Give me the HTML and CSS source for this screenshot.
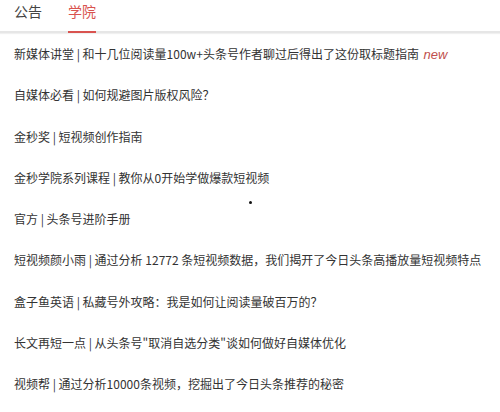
FILE: index.html
```html
<!DOCTYPE html>
<html lang="zh">
<head>
<meta charset="utf-8">
<link rel="stylesheet" href="styles.css">
</head>
<body>
<div class="page">
  <div class="tabs">
    <span class="tab">公告</span>
    <span class="tab active">学院</span>
  </div>
  <ul class="list">
    <li>新媒体讲堂 | 和十几位阅读量100w+头条号作者聊过后得出了这份取标题指南 <em class="new">new</em></li>
    <li>自媒体必看 | 如何规避图片版权风险？</li>
    <li>金秒奖 | 短视频创作指南</li>
    <li>金秒学院系列课程 | 教你从0开始学做爆款短视频</li>
    <li>官方 | 头条号进阶手册</li>
    <li>短视频颜小雨 | 通过分析 12772 条短视频数据，我们揭开了今日头条高播放量短视频特点</li>
    <li>盒子鱼英语 | 私藏号外攻略：我是如何让阅读量破百万的？</li>
    <li>长文再短一点 | 从头条号"取消自选分类"谈如何做好自媒体优化</li>
    <li>视频帮 | 通过分析10000条视频，挖掘出了今日头条推荐的秘密</li>
  </ul>
  <span class="dot"></span>
</div>
</body>
</html>
```
FILE: styles.css
```css
html, body {
  margin: 0;
  padding: 0;
  background: #fff;
}
.page {
  position: relative;
  width: 500px;
  height: 412px;
  overflow: hidden;
  font-family: "Noto Sans CJK SC", "Noto Sans", sans-serif;
  color: #333;
}
.tabs {
  display: flex;
  gap: 26px;
  padding-left: 14px;
  height: 31px;
  border-bottom: 2px solid #e6e6e6;
  box-shadow: 0 1px 1px #f0f0f0;
}
.tab {
  font-size: 14px;
  line-height: 22px;
  color: #444;
  height: 29px;
  box-sizing: border-box;
}
.tab.active {
  color: #d9534f;
  border-bottom: 2px solid #d9534f;
  height: 33px;
}
.list {
  list-style: none;
  margin: 0;
  padding: 0 0 0 14px;
}
.list li {
  font-size: 12px;
  line-height: 41.3px;
  height: 41.3px;
  white-space: nowrap;
  color: #333;
}
.new {
  font-family: "Liberation Sans", Arial, sans-serif;
  font-style: italic;
  color: #c0504d;
  font-size: 13px;
  margin-left: 2px;
}
.dot {
  position: absolute;
  left: 249px;
  top: 201px;
  width: 3px;
  height: 3px;
  border-radius: 50%;
  background: #111;
}
```
